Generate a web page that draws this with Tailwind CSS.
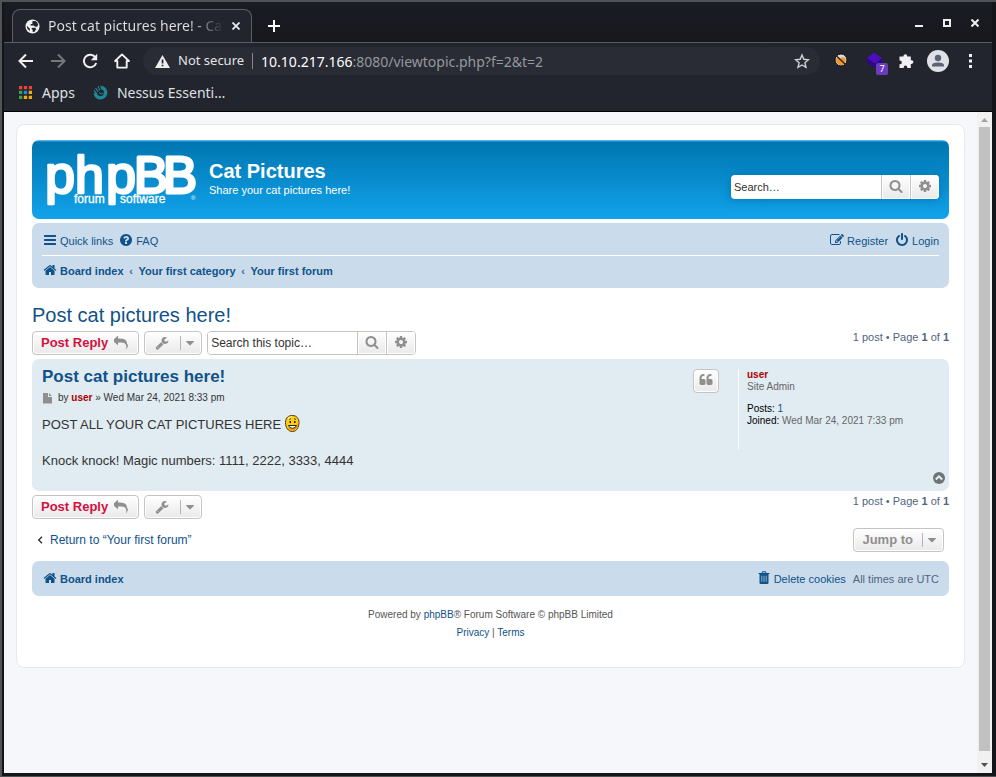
<!DOCTYPE html>
<html lang="en">
<head>
<meta charset="utf-8">
<meta name="viewport" content="width=device-width, initial-scale=1">
<title>Post cat pictures here! - Cat Pictures</title>
<script src="https://cdn.jsdelivr.net/npm/@tailwindcss/browser@4"></script>
</head>
<body class="h-screen overflow-hidden bg-[#505354] pt-[2px] pl-[2px] pb-px font-['Liberation_Sans',Arial,sans-serif]">
<svg class="hidden" aria-hidden="true">
  <symbol id="i-bars" viewBox="0 0 1792 1792"><path d="M1664 1344v128q0 26-19 45t-45 19h-1408q-26 0-45-19t-19-45v-128q0-26 19-45t45-19h1408q26 0 45 19t19 45zm0-512v128q0 26-19 45t-45 19h-1408q-26 0-45-19t-19-45v-128q0-26 19-45t45-19h1408q26 0 45 19t19 45zm0-512v128q0 26-19 45t-45 19h-1408q-26 0-45-19t-19-45v-128q0-26 19-45t45-19h1408q26 0 45 19t19 45z"/></symbol>
  <symbol id="i-search" viewBox="0 0 1792 1792"><path d="M1216 832q0-185-131.500-316.500t-316.500-131.500-316.500 131.500-131.500 316.500 131.500 316.500 316.500 131.500 316.500-131.500 131.500-316.500zm512 832q0 52-38 90t-90 38q-54 0-90-38l-343-342q-179 124-399 124-143 0-273.500-55.500t-225-150-150-225-55.500-273.500 55.500-273.500 150-225 225-150 273.500-55.500 273.500 55.500 225 150 150 225 55.500 273.500q0 220-124 399l343 343q37 37 37 90z"/></symbol>
  <symbol id="i-cog" viewBox="0 0 1792 1792"><path d="M1152 896q0-106-75-181t-181-75-181 75-75 181 75 181 181 75 181-75 75-181zm512-109v222q0 12-8 23t-20 13l-185 28q-19 54-39 91 35 50 107 138 10 12 10 25t-9 23q-27 37-99 108t-94 71q-12 0-26-9l-138-108q-44 23-91 38-16 136-29 186-7 28-36 28h-222q-14 0-24.500-8.500t-11.500-21.500l-28-184q-49-16-90-37l-141 107q-10 9-25 9-14 0-25-11-126-114-165-168-7-10-7-23 0-12 8-23 15-21 51-66.500t54-70.500q-27-50-41-99l-183-27q-13-2-21-12.500t-8-23.500v-222q0-12 8-23t19-13l186-28q14-46 39-92-40-57-107-138-10-12-10-24 0-10 9-23 26-36 98.500-107.500t94.500-71.500q13 0 26 10l138 107q44-23 91-38 16-136 29-186 7-28 36-28h222q14 0 24.500 8.500t11.500 21.500l28 184q49 16 90 37l142-107q9-9 24-9 13 0 25 10 129 119 165 170 7 8 7 22 0 12-8 23-15 21-51 66.500t-54 70.500q26 50 41 98l183 28q13 2 21 12.500t8 23.500z"/></symbol>
  <symbol id="i-home" viewBox="0 0 1792 1792"><path d="M1472 992v480q0 26-19 45t-45 19h-384v-384h-256v384h-384q-26 0-45-19t-19-45v-480q0-1 .5-3t.5-3l575-474 575 474q1 2 1 6zm223-69l-62 74q-8 9-21 11h-3q-13 0-21-7l-692-577-692 577q-12 8-24 7-13-2-21-11l-62-74q-8-10-7-23.500t11-21.500l719-599q32-26 76-26t76 26l244 204v-195q0-14 9-23t23-9h192q14 0 23 9t9 23v408l219 182q10 8 11 21.500t-7 23.500z"/></symbol>
  <symbol id="i-help" viewBox="0 0 1792 1792"><path d="M1024 1376v-192q0-14-9-23t-23-9h-192q-14 0-23 9t-9 23v192q0 14 9 23t23 9h192q14 0 23-9t9-23zm256-672q0-88-55.500-163t-138.500-116-170-41q-243 0-371 213-15 24 8 42l132 100q7 6 19 6 16 0 25-12 53-68 86-92 34-24 86-24 48 0 85.500 26t37.500 59q0 38-20 61t-68 45q-63 28-115.500 86.500t-52.500 125.500v36q0 14 9 23t23 9h192q14 0 23-9t9-23q0-19 21.500-49.500t54.500-49.500q32-18 49-28.500t46-35 44.500-48 28-60.500 12.500-81zm384 192q0 209-103 385.500t-279.500 279.500-385.500 103-385.500-103-279.500-279.500-103-385.500 103-385.500 279.500-279.500 385.500-103 385.500 103 279.500 279.500 103 385.500z"/></symbol>
  <symbol id="i-edit" viewBox="0 0 1792 1792"><path d="M888 1184l116-116-152-152-116 116v56h96v96h56zm440-720q-16-16-33 1l-350 350q-17 17-1 33t33-1l350-350q17-17 1-33zm80 594v190q0 119-84.500 203.500t-203.500 84.500h-832q-119 0-203.500-84.500t-84.500-203.500v-832q0-119 84.500-203.500t203.500-84.500h832q63 0 117 25 15 7 18 23 3 17-9 29l-49 49q-14 14-32 8-23-6-45-6h-832q-66 0-113 47t-47 113v832q0 66 47 113t113 47h832q66 0 113-47t47-113v-126q0-13 9-22l64-64q15-15 35-7t20 29zm-96-738l288 288-672 672h-288v-288zm444 132l-92 92-288-288 92-92q28-28 68-28t68 28l152 152q28 28 28 68t-28 68z"/></symbol>
  <symbol id="i-power" viewBox="0 0 1792 1792"><path d="M1664 896q0 156-61 298t-164 245-245 164-298 61-298-61-245-164-164-245-61-298q0-182 80.500-343t226.500-270q43-32 95.500-25t83.500 50q32 42 24.500 94.500t-49.500 84.500q-98 74-151.500 181t-53.500 228q0 104 40.500 198.500t109.500 163.500 163.500 109.500 198.500 40.500 198.500-40.500 163.500-109.500 109.500-163.500 40.500-198.500q0-121-53.500-228t-151.500-181q-42-32-49.500-84.500t24.500-94.500q31-43 84-50t95 25q146 109 226.500 270t80.500 343zm-640-768v640q0 52-38 90t-90 38-90-38-38-90v-640q0-52 38-90t90-38 90 38 38 90z"/></symbol>
  <symbol id="i-reply" viewBox="0 0 1792 1792"><path d="M1792 1120q0 166-127 451-3 7-10.500 24t-13.500 30-13 22q-12 17-28 17-15 0-23.500-10t-8.500-25q0-9 2.500-26.500t2.500-23.500q5-68 5-123 0-112-19.500-200.500t-54-153.500-89-112-117-79.500-154.500-48.500-184.500-24.500-218.500-7h-224v256q0 26-19 45t-45 19-45-19l-512-512q-19-19-19-45t19-45l512-512q19-19 45-19t45 19 19 45v256h224q713 0 875 403 53 134 53 333z"/></symbol>
  <symbol id="i-wrench" viewBox="0 0 1792 1792"><path d="M448 1472q0-26-19-45t-45-19-45 19-19 45 19 45 45 19 45-19 19-45zm644-420l-682 682q-37 37-90 37-52 0-91-37l-106-108q-38-36-38-90 0-53 38-91l681-681q39 98 114.500 173.500t173.500 114.500zm634-435q0 39-23 106-47 134-164.500 217.500t-258.500 83.500q-185 0-316.500-131.500t-131.500-316.500 131.500-316.500 316.500-131.500q58 0 121.500 16.500t107.500 46.500q16 11 16 28t-16 28l-293 169v224l193 107q5-3 79-48.500t135.500-81 70.500-35.500q15 0 23.500 10t8.500 25z"/></symbol>
  <symbol id="i-caret" viewBox="0 0 1792 1792"><path d="M1408 704q0 26-19 45l-448 448q-19 19-45 19t-45-19l-448-448q-19-19-19-45t19-45 45-19h896q26 0 45 19t19 45z"/></symbol>
  <symbol id="i-quote" viewBox="0 0 1792 1792"><path d="M832 960v384q0 80-56 136t-136 56h-384q-80 0-136-56t-56-136v-704q0-104 40.500-198.500t109.500-163.500 163.500-109.500 198.500-40.500h64q26 0 45 19t19 45v128q0 26-19 45t-45 19h-64q-106 0-181 75t-75 181v32q0 40 28 68t68 28h224q80 0 136 56t56 136zm896 0v384q0 80-56 136t-136 56h-384q-80 0-136-56t-56-136v-704q0-104 40.500-198.500t109.500-163.500 163.500-109.500 198.500-40.500h64q26 0 45 19t19 45v128q0 26-19 45t-45 19h-64q-106 0-181 75t-75 181v32q0 40 28 68t68 28h224q80 0 136 56t56 136z"/></symbol>
  <symbol id="i-trash" viewBox="0 0 14 14"><path fill-rule="evenodd" d="M4.500 2l.5-1.300Q5.200.3 5.700.3h2.600q.5 0 .7.400L9.500 2h2.800q.2 0 .2.300v.4q0 .3-.2.300h-.8v8.700q0 1.300-1.100 1.300H3.600q-1.100 0-1.100-1.300V3h-.8q-.2 0-.2-.3v-.4q0-.3.2-.3zm1.100 0h2.800l-.3-.7H5.900zM4.500 4.800v5.900h.7V4.800zm2.150 0v5.900h.7V4.800zm2.150 0v5.900h.7V4.800z"/></symbol>
</svg>

<div class="flex h-full flex-col border-l-2 border-r-4 border-b-[3px] border-[#14141b] bg-[#23252e]">

  <!-- Tab strip -->
  <header class="relative flex h-[41px] shrink-0 items-stretch overflow-hidden border-b border-[#5a5d61] bg-linear-to-b from-[#1a1c26] to-[#17181b]">
    <div class="relative ml-2 mt-[7px] -mb-px flex w-60 shrink-0 items-center rounded-t-lg border border-b-0 border-[#5a5d61] bg-[#23252e] pl-3 pr-[7px] pb-px">
      <svg class="mr-2 size-[15px] shrink-0" viewBox="0 0 16 16"><circle cx="8" cy="8" r="7.500" fill="#f1f1f1"/><path fill="#23252e" d="M2.200 7.500l3 2.900v2.300q-3-1.300-3.300-4.500zM8 2.200l3.300 0q2.300 1.200 2.800 4l-1.200 2H11L9.200 7H6V5.300h1.800zM8.300 9.200h2.500l1.200 1.500-1.800 2.800-2 .3V11.600L6.800 10.200z"/></svg>
      <span class="min-w-0 flex-1 overflow-hidden whitespace-nowrap bg-linear-to-r from-[#dfe0e1] from-80% to-transparent bg-clip-text font-['Noto_Sans',sans-serif] text-[14px] leading-5 text-transparent">Post cat pictures here! - Cat Pictures</span>
      <button class="ml-1 grid size-4 place-items-center" aria-label="Close tab"><svg class="size-2" viewBox="0 0 8 8" stroke="#eee" stroke-width="1.700"><path d="M.5.500l7 7M7.500.500l-7 7"/></svg></button>
    </div>
    <button class="ml-4 mt-[7px] grid size-3 place-items-center self-center" aria-label="New tab"><svg class="size-3" viewBox="0 0 12 12" stroke="#fff" stroke-width="2"><path d="M6 0v12M0 6h12"/></svg></button>
    <div class="ml-auto mr-[13px] mt-[2px] flex items-center gap-5">
      <button class="grid size-2 place-items-center" aria-label="Minimize"><svg class="size-2" viewBox="0 0 8 8"><path fill="#eee" d="M0 6h8v2H0z"/></svg></button>
      <button class="grid size-2 place-items-center" aria-label="Maximize"><svg class="size-2" viewBox="0 0 8 8"><path fill="none" stroke="#eee" stroke-width="2" d="M1 1h6v6H1z"/></svg></button>
      <button class="grid size-2 place-items-center" aria-label="Close"><svg class="size-2" viewBox="0 0 8 8" stroke="#eee" stroke-width="2"><path d="M.5.500l7 7M7.500.500l-7 7"/></svg></button>
    </div>
  </header>

  <!-- Toolbar -->
  <div class="flex h-[37px] shrink-0 items-center pb-px pl-[14px] pr-5 font-['Noto_Sans',sans-serif]">
    <nav class="flex items-center gap-4" aria-label="Navigation">
      <button aria-label="Back"><svg class="size-4" viewBox="0 0 16 16" fill="none" stroke="#f1f1f1" stroke-width="2"><path d="M15 8H2M8 1.500L1.500 8 8 14.500"/></svg></button>
      <button aria-label="Forward"><svg class="size-4" viewBox="0 0 16 16" fill="none" stroke="#75777c" stroke-width="2"><path d="M1 8h13M8 1.500L14.500 8 8 14.500"/></svg></button>
      <button aria-label="Reload"><svg class="size-4" viewBox="0 0 16 16"><path fill="none" stroke="#f1f1f1" stroke-width="2" d="M13.500 4.500A6.300 6.300 0 1 0 14.200 10"/><path fill="#f1f1f1" d="M15.200.8v6.400H8.800z"/></svg></button>
      <button aria-label="Home"><svg class="size-4" viewBox="0 0 17 17"><path fill="none" stroke="#f1f1f1" stroke-width="2" stroke-linejoin="round" d="M1.200 8.500L8.500 1.500l7.300 7H13.500V15.500h-10V8.500z"/></svg></button>
    </nav>
    <div class="ml-[13px] flex h-7 flex-1 items-center rounded-full bg-[#292b35] pl-3 pr-[10px] text-[13px]">
      <svg class="mr-2 size-[15px] shrink-0" viewBox="0 0 15 15"><path fill="#eee" d="M7.500 1L15 14H0z"/><path fill="#23252e" d="M6.700 5.500h1.700v4H6.700zM6.700 10.700h1.700v1.600H6.700z"/></svg>
      <span class="text-[#e3e4e5]">Not secure</span>
      <span class="mx-2 h-4 w-px bg-[#85878b]"></span>
      <a href="#" class="flex-1 text-[14px] text-[#96989c]"><span class="text-white">10.10.217.166</span>:8080/viewtopic.php?f=2&amp;t=2</a>
      <button aria-label="Bookmark this tab"><svg class="size-4" viewBox="0 0 16 16"><path fill="none" stroke="#d0d1d3" stroke-width="1.400" d="M8 2l1.800 4.300 4.700.4-3.600 3.100 1.100 4.600L8 12l-4 2.400 1.100-4.600L1.500 6.700l4.700-.4z"/></svg></button>
    </div>
    <div class="ml-[14px] flex items-center">
      <button class="-mt-[3px]" aria-label="Cookie blocker"><svg class="size-[14px]" viewBox="0 0 14 14"><circle cx="7" cy="7" r="6" fill="#d9d2c8" stroke="#111" stroke-width="1"/><path fill="#f0962e" d="M2 6l3-2 1.500 1.500L8.500 4l3 1.500V9L9 12H5.500L2.500 9.500z"/><path fill="#ddd" d="M3 4Q4.500 1.800 7 1.800q2 0 3.500 1.200L8.500 4.200 6 3.200z"/><path stroke="#222" stroke-width="1.200" d="M2.500 3l9 8.500"/></svg></button>
      <button class="relative ml-[18px]" aria-label="Extension, 7 items"><svg class="size-[18px]" viewBox="0 0 18 18"><path fill="#2b0a83" d="M1 6v5l7 5 8-5V6z"/><path fill="#4b0fbb" d="M8 .500l8 5.500-7 5.500L1 6z"/></svg><span class="absolute left-[10px] top-[11px] grid h-3 w-3 place-items-center rounded-xs bg-[#6a3bc0] text-[9px] leading-3 text-white">7</span></button>
      <button class="ml-[14px]" aria-label="Extensions"><svg class="size-4" viewBox="0 0 16 16"><path fill="#f1f1f1" d="M1.500 3.500h4V3a1.800 1.800 0 0 1 3.700 0v.5h3.600v3.800h.8a1.800 1.800 0 0 1 0 3.600h-.8V15H9.300v-.6a1.800 1.800 0 0 0-3.600 0v.6H1.500v-3.700h.4a1.900 1.900 0 0 0 0-3.800h-.4z"/></svg></button>
      <button class="ml-[13px]" aria-label="Profile"><svg class="size-[22px]" viewBox="0 0 22 22"><circle cx="11" cy="11" r="11" fill="#dee1e6"/><circle cx="11" cy="8" r="3.200" fill="#5a6375"/><path fill="#5a6375" d="M5 16.500v-1.300q0-2.700 6-2.700t6 2.700v1.300z"/></svg></button>
      <button class="ml-5" aria-label="Menu"><svg class="h-[14px] w-[3px]" viewBox="0 0 3 14" fill="#f1f1f1"><path d="M0 0h3v3H0zM0 5.500h3v3H0zM0 11h3v3H0z"/></svg></button>
    </div>
  </div>

  <!-- Bookmarks bar -->
  <nav class="flex h-8 shrink-0 items-center border-b border-black pb-[6px] pl-[15px] font-['Noto_Sans',sans-serif] text-[14px] text-[#dfe0e1]" aria-label="Bookmarks">
    <a href="#" class="flex items-center gap-[10px]">
      <svg class="size-[13px]" viewBox="0 0 14 14"><path fill="#ea4335" d="M0 0h3.500v3.500H0zM5.200 0h3.500v3.500H5.200zM10.500 0H14v3.500h-3.500z"/><path fill="#34a853" d="M0 5.200h3.500v3.500H0zM0 10.500h3.500V14H0z"/><path fill="#1a8cf0" d="M5.200 5.200h3.500v3.500H5.200z"/><path fill="#fbab05" d="M10.500 5.200H14v3.500h-3.500zM5.200 10.500h3.500V14H5.200zM10.500 10.500H14V14h-3.500z"/></svg>
      Apps</a>
    <a href="#" class="ml-[18px] flex items-center gap-[9px]">
      <svg class="size-[15px]" viewBox="0 0 15 15" fill="none"><path stroke="#1d8793" stroke-width="3.400" d="M8.500 2.500A5.200 5.200 0 1 1 2.300 8"/><path stroke="#1d8793" stroke-width="1.200" d="M1 5.500l2.500 3M2.500 3.200l2.800 3.500M5 1.200l2 4M7.500.8l2 3.500"/><path stroke="#1d8793" d="M6 7.500q2 3 4.500.5"/></svg>
      Nessus Essenti…</a>
  </nav>

  <div class="flex min-h-0 flex-1 bg-[#f5f7fa]">
    <main class="min-w-0 flex-1 p-3">
      <div class="rounded-lg border border-[#e6e9ed] bg-white px-[15px] pt-[15px] pb-[25px] text-[11px] text-[#536482]">

        <!-- Site header -->
        <div class="mb-1 flex h-[79px] items-start justify-between rounded-[7px] bg-linear-to-b from-[#6aceff] from-[0px] via-[#0076b1] via-[2px] to-[#12a3eb] px-[10px] text-white">
          <div class="flex">
            <a href="#" aria-label="phpBB forum software" class="mt-3 ml-1">
              <svg class="h-[54px] w-[152px] overflow-visible" viewBox="0 0 152 54" fill="#fff">
                <g stroke="#fff" stroke-width="2.600" stroke-linejoin="round">
                  <text y="41" font-size="54" x="-1">p</text>
                  <text y="41" font-size="52" x="29">h</text>
                  <text y="41" font-size="54" x="60">p</text>
                </g>
                <text y="41" font-size="51" stroke="#fff" stroke-width="3" stroke-linejoin="round" x="88 117">BB</text>
                <g stroke="#fff" stroke-width=".3" font-size="12"><text x="28" y="51">forum</text><text x="74" y="51">software</text></g>
                <text x="145" y="48" font-size="6">®</text>
              </svg>
            </a>
            <div class="mt-5 ml-[11px]">
              <h1 class="text-xl leading-[22px] font-bold">Cat Pictures</h1>
              <p class="leading-4">Share your cat pictures here!</p>
            </div>
          </div>
          <form class="mt-[35px] flex h-6 overflow-hidden rounded-sm shadow-[0_0_10px_#0075b0]">
            <input type="search" aria-label="Search" placeholder="Search…" class="w-[150px] bg-white px-[3px] text-[11px] text-[#333] placeholder:text-[#333]">
            <button type="button" aria-label="Search" class="grid w-[29px] place-items-center border-l border-[#c7c3bf] bg-linear-to-b from-white to-[#e9e9e9] pb-[2px] text-[#8f8f8f] shadow-[inset_0_0_0_1px_#fff]"><svg class="size-[14px] fill-current"><use href="#i-search"/></svg></button>
            <button type="button" aria-label="Advanced search" class="grid w-[29px] place-items-center border-l border-[#c7c3bf] bg-linear-to-b from-white to-[#e9e9e9] pb-[2px] text-[#8f8f8f] shadow-[inset_0_0_0_1px_#fff]"><svg class="size-[14px] fill-current"><use href="#i-cog"/></svg></button>
          </form>
        </div>

        <!-- Navigation bar -->
        <div class="rounded-[7px] bg-[#cadceb] px-[10px] pt-[3px] text-[#105289]">
          <div class="flex h-[30px] items-center gap-[7px] border-b border-white pl-px">
            <a href="#" class="flex items-start gap-[3px] leading-4"><svg class="mt-px size-[14px] fill-current"><use href="#i-bars"/></svg><span class="pt-px">Quick links</span></a>
            <a href="#" class="-ml-px flex items-start gap-[3px] leading-4"><svg class="mt-px size-[14px] fill-current"><use href="#i-help"/></svg><span class="pt-px">FAQ</span></a>
            <a href="#" class="ml-auto flex items-start gap-[3px] leading-4"><svg class="mt-px size-[14px] fill-current"><use href="#i-edit"/></svg><span class="pt-px">Register</span></a>
            <a href="#" class="flex items-start gap-[3px] leading-4"><svg class="mt-px size-[14px] fill-current"><use href="#i-power"/></svg><span class="pt-px">Login</span></a>
          </div>
          <nav class="flex h-8 items-center pb-[2px] pl-px font-bold" aria-label="Breadcrumb">
            <a href="#" class="flex items-start gap-[3px] leading-4"><svg class="size-[14px] fill-current"><use href="#i-home"/></svg>Board index</a>
            <span class="w-[15px] text-center text-[#536482]">‹</span><a href="#">Your first category</a>
            <span class="w-[15px] text-center text-[#536482]">‹</span><a href="#">Your first forum</a>
          </nav>
        </div>

        <h2 class="mt-4 text-xl leading-[22px] text-[#105289]"><a href="#">Post cat pictures here!</a></h2>

        <!-- Topic actions -->
        <div class="mt-[5px] flex h-6 gap-[5px]">
          <a href="#" class="flex items-center gap-[6px] rounded-sm border border-[#c7c3bf] bg-linear-to-b from-white to-[#e9e9e9] pl-2 pr-[10px] text-[13px] font-bold text-[#d31141] shadow-[inset_0_0_0_1px_#fff]">Post Reply<svg class="mb-px size-[14px] fill-[#8f8f8f]"><use href="#i-reply"/></svg></a>
          <button aria-label="Topic tools" class="flex w-[58px] items-center justify-between rounded-sm border border-[#c7c3bf] bg-linear-to-b from-white to-[#e9e9e9] pl-[10px] pr-1 text-[#8f8f8f] shadow-[inset_0_0_0_1px_#fff]"><svg class="mb-px size-[14px] fill-current"><use href="#i-wrench"/></svg><span class="flex items-center border-l border-[#b4b4b4] pl-[2px]"><svg class="size-[14px] fill-current"><use href="#i-caret"/></svg></span></button>
          <form class="flex overflow-hidden rounded-sm border border-[#c7c3bf]">
            <input type="search" aria-label="Search this topic" placeholder="Search this topic…" class="w-[149px] bg-white px-[3px] text-[12px] text-[#333] placeholder:text-[#333]">
            <button type="button" aria-label="Search" class="grid w-[29px] place-items-center border-l border-[#c7c3bf] bg-linear-to-b from-white to-[#e9e9e9] pb-[2px] text-[#8f8f8f] shadow-[inset_0_0_0_1px_#fff]"><svg class="size-[14px] fill-current"><use href="#i-search"/></svg></button>
            <button type="button" aria-label="Advanced search" class="grid w-[29px] place-items-center border-l border-[#c7c3bf] bg-linear-to-b from-white to-[#e9e9e9] pb-[2px] text-[#8f8f8f] shadow-[inset_0_0_0_1px_#fff]"><svg class="size-[14px] fill-current"><use href="#i-cog"/></svg></button>
          </form>
          <p class="ml-auto leading-3">1 post • Page <b>1</b> of <b>1</b></p>
        </div>

        <!-- Post -->
        <article class="mt-1 flex min-h-[132px] rounded-[7px] bg-[#e1ebf2] py-[5px] pl-[10px] pr-1">
          <div class="min-w-0 flex-1 pt-[3px]">
            <h3 class="text-[17px] leading-5 font-bold text-[#105289]"><a href="#">Post cat pictures here!</a></h3>
            <p class="mt-[5px] flex items-center text-[10px] leading-3 whitespace-pre text-[#333]"><svg class="mr-[5px] h-3 w-[11px]" viewBox="0 0 11 12" fill="#8f8f8f"><path d="M1 1h5v4h4v6.500H1zM7 1l3 3H7z"/></svg>by <a href="#" class="font-bold text-[#a00]">user</a> » Wed Mar 24, 2021 8:33 pm</p>
            <div class="mt-3 text-[13px] leading-[18px] text-[#333]">
              <p class="flex items-center gap-1">POST ALL YOUR CAT PICTURES HERE
                <svg class="-mt-2 -mb-1 h-[17px] w-[15px]" viewBox="0 0 15 17" role="img" aria-label="Very happy"><path fill="#fc1" stroke="#4a3a10" d="M7.500.500c4 0 6.500 3 6.500 7s-2 9-6.500 9S.5 12.500.5 7.500s3-7 7-7z"/><path fill="#f90" d="M13.300 6c.3 5-2 9.700-6 9.800-2.400 0-4-1.600-5-3.600 5 3 9.500.8 11-6.200z"/><path fill="#fff6a0" d="M3 3q2-2.200 4.500-1.800L3 5z"/><path fill="#fff" stroke="#222" stroke-width="1" d="M3.500 10.500h8q-1 2.800-4 2.800t-4-2.800z"/><path stroke="#222" stroke-width=".8" d="M4 4.500l2-.8M9 3.700l2 .8"/><path fill="#222" d="M4.500 6H6v2H4.500zM9 6h1.500v2H9z"/></svg></p>
              <p class="mt-[18px]">Knock knock! Magic numbers: 1111, 2222, 3333, 4444</p>
            </div>
          </div>
          <button aria-label="Reply with quote" class="mt-[5px] grid h-6 w-[26px] place-items-center rounded-sm border border-[#c7c3bf] bg-linear-to-b from-white to-[#e9e9e9] pb-[2px] text-[#8f8f8f] shadow-[inset_0_0_0_1px_#fff]"><svg class="size-[14px] fill-current"><use href="#i-quote"/></svg></button>
          <div class="mt-[5px] ml-[19px] flex w-[207px] flex-col">
            <dl class="min-h-20 border-l border-white pl-2 text-[10px] leading-3 text-[#666]">
              <dt class="font-bold text-[#a00]"><a href="#">user</a></dt>
              <dd>Site Admin</dd>
              <dd class="mt-[10px]"><span class="text-black">Posts:</span> <a href="#" class="text-[#105289]">1</a></dd>
              <dd><span class="text-black">Joined:</span> Wed Mar 24, 2021 7:33 pm</dd>
            </dl>
            <a href="#" aria-label="Top" class="mt-auto mb-[2px] self-end"><svg class="size-3" viewBox="0 0 12 12"><circle cx="6" cy="6" r="6" fill="#6f7276"/><path fill="none" stroke="#e8eff4" stroke-width="2" d="M2.800 7.500L6 4.300l3.200 3.200"/></svg></a>
          </div>
        </article>

        <div class="mt-1 flex h-6 gap-[5px]">
          <a href="#" class="flex items-center gap-[6px] rounded-sm border border-[#c7c3bf] bg-linear-to-b from-white to-[#e9e9e9] pl-2 pr-[10px] text-[13px] font-bold text-[#d31141] shadow-[inset_0_0_0_1px_#fff]">Post Reply<svg class="mb-px size-[14px] fill-[#8f8f8f]"><use href="#i-reply"/></svg></a>
          <button aria-label="Topic tools" class="flex w-[58px] items-center justify-between rounded-sm border border-[#c7c3bf] bg-linear-to-b from-white to-[#e9e9e9] pl-[10px] pr-1 text-[#8f8f8f] shadow-[inset_0_0_0_1px_#fff]"><svg class="mb-px size-[14px] fill-current"><use href="#i-wrench"/></svg><span class="flex items-center border-l border-[#b4b4b4] pl-[2px]"><svg class="size-[14px] fill-current"><use href="#i-caret"/></svg></span></button>
          <p class="ml-auto leading-3">1 post • Page <b>1</b> of <b>1</b></p>
        </div>

        <div class="mt-[9px] flex h-6 items-center justify-between pl-[5px] pr-[5px]">
          <a href="#" class="flex items-center gap-[7px] text-[12px] text-[#105289]"><svg class="h-2 w-[6px]" viewBox="0 0 6 8" fill="none" stroke="#333" stroke-width="1.400"><path d="M5 .700L1.700 4 5 7.300"/></svg>Return to “Your first forum”</a>
          <button class="flex h-6 items-center rounded-sm border border-[#c7c3bf] bg-linear-to-b from-white to-[#e9e9e9] pl-2 pr-1 text-[13px] font-bold text-[#8f8f8f] shadow-[inset_0_0_0_1px_#fff]">Jump to<span class="ml-[9px] flex items-center border-l border-[#b4b4b4] pl-[2px]"><svg class="size-[14px] fill-current"><use href="#i-caret"/></svg></span></button>
        </div>

        <!-- Footer -->
        <div class="mt-[9px] flex h-[35px] items-center rounded-[7px] bg-[#cadceb] pl-[11px] pr-[10px] leading-4 text-[#105289]">
          <a href="#" class="flex items-start gap-[3px] font-bold"><svg class="mt-px size-[14px] fill-current"><use href="#i-home"/></svg><span class="pt-px">Board index</span></a>
          <a href="#" class="ml-auto flex items-start gap-[3px]"><svg class="mt-px size-[14px] fill-current"><use href="#i-trash"/></svg><span class="pt-px">Delete cookies</span></a>
          <span class="ml-[7px] pt-px text-[#536482]">All times are UTC</span>
        </div>
        <footer class="pt-[10px] text-center text-[10px] leading-[18px] text-[#555]">
          <p>Powered by <a href="#" class="text-[#105289]">phpBB</a>® Forum Software © phpBB Limited</p>
          <p><a href="#" class="text-[#105289]">Privacy</a> | <a href="#" class="text-[#105289]">Terms</a></p>
        </footer>
      </div>
    </main>

    <!-- Scrollbar -->
    <div class="flex w-[15px] shrink-0 flex-col items-center bg-[#f1f1f1]" aria-hidden="true">
      <svg class="h-[15px] w-[15px]" viewBox="0 0 15 15"><path fill="#a3a3a3" d="M4 10l3.500-4 3.500 4z"/></svg>
      <div class="w-[11px] flex-1 bg-[#c1c1c1]"></div>
      <svg class="h-[22px] w-[15px]" viewBox="0 0 15 22"><path fill="#505050" d="M4 12h7l-3.500 4z"/></svg>
    </div>
  </div>
</div>
</body>
</html>
